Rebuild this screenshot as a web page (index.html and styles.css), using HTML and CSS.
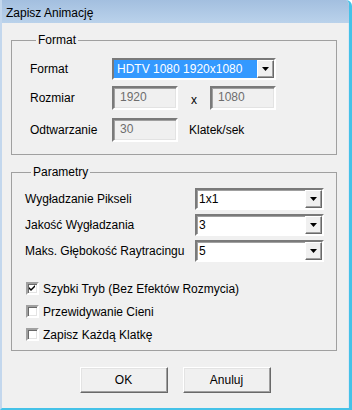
FILE: index.html
```html
<!DOCTYPE html>
<html lang="pl">
<head>
<meta charset="utf-8">
<title>Zapisz Animację</title>
<link rel="stylesheet" href="styles.css">
</head>
<body>
<div class="window">
  <div class="titlebar">Zapisz Animację</div>
  <div class="client">
    <fieldset class="group g-format">
      <legend>Format</legend>
      <div class="row r-combo">
        <span class="lbl lbl-format">Format</span>
        <div class="combo combo-wide selected">
          <span class="val">HDTV 1080 1920x1080</span>
          <span class="drop"><svg width="7" height="4" viewBox="0 0 7 4"><polygon points="0,0 7,0 3.5,4" fill="#000"/></svg></span>
        </div>
      </div>
      <div class="row r-edit">
        <span class="lbl lbl-format">Rozmiar</span>
        <div class="edit">1920</div>
        <span class="times">x</span>
        <div class="edit">1080</div>
      </div>
      <div class="row r-edit r-last">
        <span class="lbl lbl-format">Odtwarzanie</span>
        <div class="edit">30</div>
        <span class="unit">Klatek/sek</span>
      </div>
    </fieldset>

    <fieldset class="group g-params">
      <legend>Parametry</legend>
      <div class="row r-combo">
        <span class="lbl lbl-params">Wygładzanie Pikseli</span>
        <div class="combo combo-narrow">
          <span class="val">1x1</span>
          <span class="drop"><svg width="7" height="4" viewBox="0 0 7 4"><polygon points="0,0 7,0 3.5,4" fill="#000"/></svg></span>
        </div>
      </div>
      <div class="row r-combo r-gap">
        <span class="lbl lbl-params">Jakość Wygładzania</span>
        <div class="combo combo-narrow">
          <span class="val">3</span>
          <span class="drop"><svg width="7" height="4" viewBox="0 0 7 4"><polygon points="0,0 7,0 3.5,4" fill="#000"/></svg></span>
        </div>
      </div>
      <div class="row r-combo r-gap">
        <span class="lbl lbl-params">Maks. Głębokość Raytracingu</span>
        <div class="combo combo-narrow">
          <span class="val">5</span>
          <span class="drop"><svg width="7" height="4" viewBox="0 0 7 4"><polygon points="0,0 7,0 3.5,4" fill="#000"/></svg></span>
        </div>
      </div>

      <div class="checks">
        <div class="check">
          <span class="box"><svg width="9" height="9" viewBox="0 0 9 9"><path d="M1 3 L3 5 L7 1 L7 3 L3 7 L1 5 Z" fill="#000"/></svg></span>
          <span class="ctext">Szybki Tryb (Bez Efektów Rozmycia)</span>
        </div>
        <div class="check">
          <span class="box"></span>
          <span class="ctext">Przewidywanie Cieni</span>
        </div>
        <div class="check">
          <span class="box"></span>
          <span class="ctext">Zapisz Każdą Klatkę</span>
        </div>
      </div>
    </fieldset>

    <div class="buttons">
      <div class="btn">OK</div>
      <div class="btn">Anuluj</div>
    </div>
  </div>
</div>
</body>
</html>
```

FILE: styles.css
```css
html, body {
  margin: 0;
  padding: 0;
  background: #ffffff;
}

body {
  font-family: "Liberation Sans", Arial, sans-serif;
  font-size: 12px;
  color: #000;
}

.window {
  width: 352px;
  height: 410px;
  box-sizing: border-box;
  border-left: 2px solid #c3d7ed;
  border-right: 3px solid #45c2e8;
  border-bottom: 2px solid #45c2e8;
  border-top-right-radius: 6px;
  overflow: hidden;
  display: flex;
  flex-direction: column;
  background: #f0f0f0;
}

.titlebar {
  height: 23px;
  flex: none;
  box-sizing: border-box;
  padding: 6px 0 0 4px;
  line-height: 14px;
  font-size: 12px;
  color: #000;
  background: linear-gradient(#a3bfdf, #bad2eb);
}

.client {
  flex: 1;
  background: #f0f0f0;
  border-right: 1px solid #dde8f4;
}

.group {
  margin: 10px 0 0 9px;
  width: 326px;
  box-sizing: border-box;
  border: 1px solid #a0a0a0;
  min-width: 0;
}

.group legend {
  margin-left: 6px;
  padding: 0 2px;
  line-height: 14px;
}

.g-format {
  padding: 11px 0 12px 18px;
}

.g-params {
  padding: 9px 0 9px 13px;
}

.row {
  display: flex;
  align-items: center;
}

.r-combo {
  height: 22px;
}

.r-gap {
  margin-top: 4px;
}

.r-edit {
  height: 24px;
  margin-top: 6px;
}

.r-last {
  margin-top: 8px;
}

.lbl-format {
  width: 82px;
  flex: none;
}

.lbl-params {
  width: 170px;
  flex: none;
}

.combo {
  height: 22px;
  box-sizing: border-box;
  border-style: solid;
  border-width: 2px;
  border-color: #7a7a7a #ffffff #ffffff #7a7a7a;
  box-shadow: inset 1px 1px 0 #a0a0a0;
  background: #fff;
  display: flex;
}

.combo-wide {
  width: 164px;
}

.combo-narrow {
  width: 129px;
}

.combo .val {
  flex: 1;
  line-height: 18px;
  padding-left: 2px;
  white-space: nowrap;
  overflow: hidden;
}

.combo.selected .val {
  background: #3399ff;
  color: #fff;
  padding-left: 3px;
}

.drop {
  width: 17px;
  height: 18px;
  flex: none;
  box-sizing: border-box;
  background: #f0f0f0;
  border-style: solid;
  border-width: 1px;
  border-color: #ffffff #696969 #696969 #ffffff;
  box-shadow: inset -1px -1px 0 #a0a0a0;
  display: flex;
  align-items: center;
  justify-content: center;
  padding-bottom: 1px;
}

.drop svg {
  display: block;
}

.edit {
  width: 66px;
  height: 24px;
  box-sizing: border-box;
  border-style: solid;
  border-width: 2px;
  border-color: #7a7a7a #ffffff #ffffff #7a7a7a;
  box-shadow: inset 1px 1px 0 #a0a0a0, inset -1px -1px 0 #e3e3e3;
  background: #f0f0f0;
  color: #6d6d6d;
  padding: 2px 0 0 6px;
  line-height: 14px;
}

.times {
  width: 32px;
  text-align: center;
  padding-top: 4px;
}

.unit {
  margin-left: 11px;
}

.checks {
  margin-top: 20px;
  margin-left: 1px;
  display: flex;
  flex-direction: column;
  gap: 10px;
}

.check {
  display: flex;
  align-items: center;
  height: 13px;
}

.box {
  width: 13px;
  height: 13px;
  box-sizing: border-box;
  border-style: solid;
  border-width: 2px;
  border-color: #a0a0a0 #ffffff #ffffff #a0a0a0;
  box-shadow: inset 1px 1px 0 #696969, inset -1px -1px 0 #e3e3e3;
  background: #fff;
  display: flex;
  align-items: center;
  justify-content: center;
}

.box svg {
  display: block;
}

.ctext {
  margin-left: 4px;
  line-height: 14px;
}

.buttons {
  margin-top: 16px;
  display: flex;
  justify-content: center;
  gap: 15px;
}

.btn {
  width: 88px;
  height: 26px;
  box-sizing: border-box;
  background: #f0f0f0;
  border-style: solid;
  border-width: 1px;
  border-color: #ffffff #696969 #696969 #ffffff;
  box-shadow: inset -1px -1px 0 #a0a0a0, inset 1px 1px 0 #e3e3e3;
  display: flex;
  align-items: center;
  justify-content: center;
}
```
